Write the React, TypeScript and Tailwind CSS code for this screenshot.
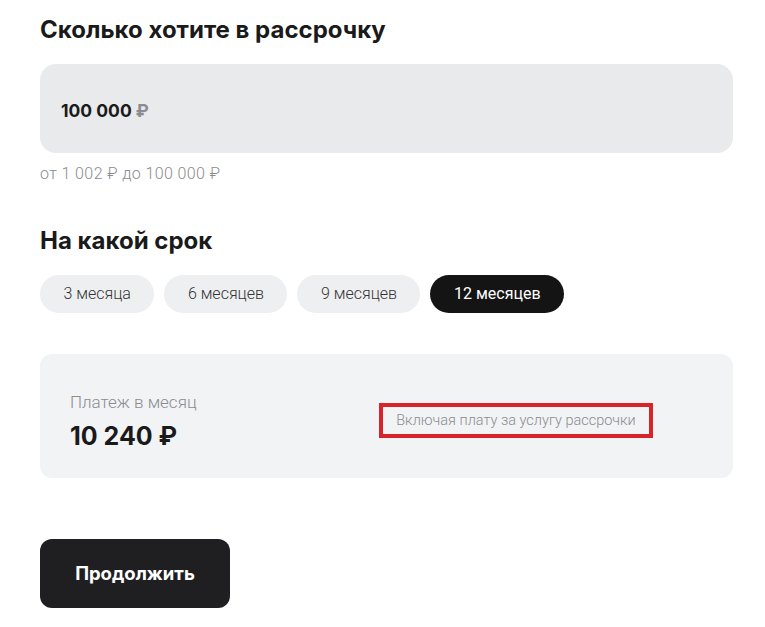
export default function App() {
  const terms = ["3 месяца", "6 месяцев", "9 месяцев", "12 месяцев"];
  const active = "12 месяцев";

  return (
    <div className="min-h-screen bg-white font-['Roboto',sans-serif] text-[#1a1a1a]">
      <div className="w-[693px] ml-[40px] pt-[14px]">
        {/* Сумма */}
        <h1 className="font-['Inter',sans-serif] text-[24px] font-bold leading-[32px]">Сколько хотите в рассрочку</h1>
        <div className="mt-[18px] h-[89px] rounded-[16px] bg-[#e9eaec] flex items-center px-[21px] pt-[5px]">
          <span className="font-['Inter',sans-serif] text-[17.5px] font-bold text-[#1a1a1a]">
            100 000 <span className="text-[#8a8c90]">₽</span>
          </span>
        </div>
        <p className="mt-[11px] text-[16px] font-light tracking-[0.4px] text-[#8a8c90] leading-[20px]">
          от 1 002 ₽ до 100 000 ₽
        </p>

        {/* Срок */}
        <h2 className="mt-[41px] font-['Inter',sans-serif] text-[24px] font-bold leading-[32px]">На какой срок</h2>
        <div className="mt-[18px] flex gap-[10px]">
          {terms.map((t) => (
            <button
              key={t}
              type="button"
              className={
                t === active
                  ? "h-[38px] rounded-full px-[23.5px] text-[16px] bg-[#141414] text-white"
                  : "h-[38px] rounded-full px-[23.5px] text-[16px] font-light bg-[#eeeff1] text-[#333]"
              }
            >
              {t}
            </button>
          ))}
        </div>

        {/* Платеж */}
        <div className="mt-[41px] h-[124px] rounded-[12px] bg-[#f2f3f5] flex items-start pl-[30px] pt-[37px]">
          <div className="w-[309px]">
            <div className="text-[17px] font-light text-[#8a8c90] leading-[22px]">Платеж в месяц</div>
            <div className="mt-[8px] font-['Inter',sans-serif] text-[25px] font-bold leading-[30px]">10 240 ₽</div>
          </div>
          <div className="mt-[12px] w-[274px] h-[35px] border-[4px] border-[#d8232a] flex items-center justify-center">
            <span className="text-[14.5px] font-light text-[#8a8c90]">Включая плату за услугу рассрочки</span>
          </div>
        </div>

        <button
          type="button"
          className="mt-[61px] w-[190px] h-[69px] rounded-[12px] bg-[#1f1f22] text-white font-['Inter',sans-serif] text-[18.5px] font-bold"
        >
          Продолжить
        </button>
      </div>
    </div>
  );
}
